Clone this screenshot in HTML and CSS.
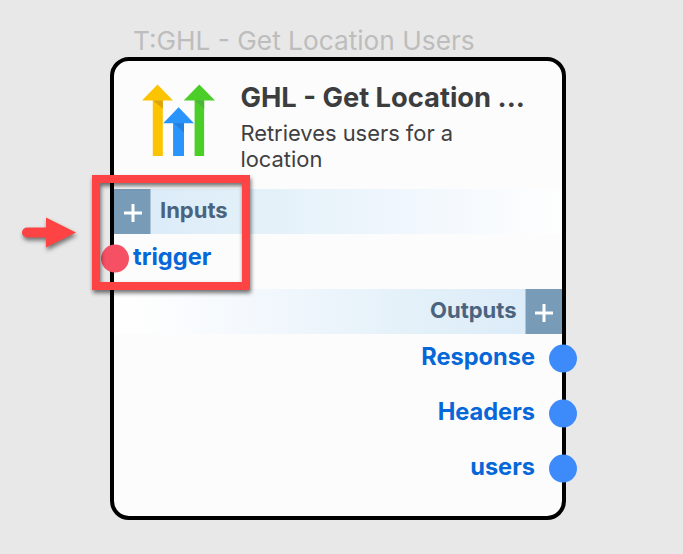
FILE: index.html
```html
<!DOCTYPE html>
<html lang="en">
<head>
<meta charset="utf-8">
<title>GHL - Get Location Users</title>
<link rel="stylesheet" href="styles.css">
</head>
<body>
<main class="canvas">
  <div class="node-label">T:GHL - Get Location Users</div>
  <section class="node">
    <header class="node-header">
      <svg class="logo" viewBox="0 0 74 74" aria-hidden="true">
        <path fill="#fcc400" d="M15.5 1.5 31 17.5H20.8V73H10.8V17.5H0z"/>
        <path fill="#d9a50c" d="M11 17.5h9.8v8.2z"/>
        <path fill="#4bce27" d="M57.3 1.5 73 17.5H62.1V73H52.6V17.5H41.7z"/>
        <path fill="#4bb53a" d="M53 17.5h9.2v8.6z"/>
        <path fill="#2894fc" d="M36.6 24.3 52 40.3H42V73H31.1V40.3H21.2z"/>
        <path fill="#2380dc" d="M31.8 40.3H42v9.2z"/>
      </svg>
      <div class="node-text">
        <h1 class="node-title">GHL - Get Location ...</h1>
        <p class="node-desc">Retrieves users for a location</p>
      </div>
    </header>
    <div class="band inputs">
      <span class="add"><svg viewBox="0 0 18 18"><path d="M9 0v18M0 9h18"/></svg></span>
      <span class="band-title">Inputs</span>
    </div>
    <div class="port port-in"><span class="dot"></span><span class="port-name">trigger</span></div>
    <div class="band outputs">
      <span class="band-title">Outputs</span>
      <span class="add"><svg viewBox="0 0 18 18"><path d="M9 0v18M0 9h18"/></svg></span>
    </div>
    <div class="ports-out">
      <div class="port port-out"><span class="port-name">Response</span><span class="dot"></span></div>
      <div class="port port-out"><span class="port-name">Headers</span><span class="dot"></span></div>
      <div class="port port-out"><span class="port-name">users</span><span class="dot"></span></div>
    </div>
  </section>
  <div class="highlight"></div>
  <svg class="pointer" viewBox="0 0 56 32" aria-hidden="true">
    <path d="M5 10.5H24V0.500L54 15.500 24 30.500V20.500H5A5 5 0 0 1 5 10.500z"/>
  </svg>
</main>
</body>
</html>
```
FILE: styles.css
```css
* { box-sizing: border-box; }

body {
  margin: 0;
  background: #e8e8e8;
  font-family: Inter, "Liberation Sans", sans-serif;
}

.canvas {
  position: relative;
  width: 683px;
  height: 554px;
  padding: 24px 0 0 110px;
  overflow: hidden;
}

.node-label {
  height: 33px;
  padding-left: 23px;
  font-size: 26.25px;
  line-height: 33px;
  color: #bdbdbd;
  white-space: nowrap;
}

.node {
  width: 456px;
  height: 463px;
  border: 4px solid #000;
  border-radius: 19px;
  background: #fcfcfc;
}

.node-header {
  display: flex;
  height: 128px;
  padding: 22px 0 0 28px;
}

.logo {
  flex: none;
  width: 74px;
  height: 74px;
}

.node-text { margin-left: 24.4px; }

.node-title {
  margin: 0;
  font-size: 27.3px;
  font-weight: 700;
  line-height: 30px;
  color: #3c3d3f;
  white-space: nowrap;
}

.node-desc {
  width: 240px;
  margin: 7px 0 0;
  font-size: 21.9px;
  line-height: 26px;
  color: #3f4042;
}

.band {
  display: flex;
  height: 45.4px;
}

.inputs { background: linear-gradient(90deg, #d9eaf8, #e4f1f9 35%, #eff6fd 62%, #fefefe); }

.outputs {
  justify-content: flex-end;
  background: linear-gradient(270deg, #d9eaf8, #e4f1f9 35%, #f3f8fd 68%, #fefefe 95%);
}

.add {
  display: grid;
  place-items: center;
  width: 37px;
  background: #789bb7;
  border-right: 1px solid #adc4d6;
}

.outputs .add {
  border-right: 0;
  border-left: 1px solid #adc4d6;
}

.add svg {
  width: 18px;
  height: 18px;
  margin: 2px 0 0 1px;
  fill: none;
  stroke: #fff;
  stroke-width: 3;
}

.outputs .add svg { margin-left: 0; }

.band-title {
  padding: 0 8.5px 0 9px;
  font-size: 22px;
  font-weight: 700;
  line-height: 42px;
  color: #4a637e;
}

.port {
  display: flex;
  align-items: center;
  height: 55px;
}

.port-in {
  height: 54.6px;
  margin-left: -13px;
  padding-bottom: 6px;
}

.port-out {
  justify-content: flex-end;
  margin-right: -15px;
}

.dot {
  flex: none;
  width: 28px;
  height: 28px;
  border-radius: 50%;
  background: #3d8bfb;
  transform: translateY(-0.4px);
}

.port-in .dot { background: #f55064; }

.port-name {
  font-size: 23.6px;
  font-weight: 700;
  line-height: 28px;
  color: #0667d8;
  transform: translateY(-2px);
}

.port-in .port-name { margin-left: 4px; }
.port-out .port-name { margin-right: 14px; }
.ports-out { margin-top: -3px; }

.highlight {
  position: absolute;
  left: 92px;
  top: 175px;
  width: 158px;
  height: 115px;
  border: 8px solid #fe4345;
  filter: drop-shadow(1px 3px 2px rgba(0, 0, 0, 0.55));
}

.pointer {
  position: absolute;
  left: 22px;
  top: 217px;
  width: 56px;
  height: 32px;
  overflow: visible;
  fill: #fe4345;
  filter: drop-shadow(1px 3px 2px rgba(0, 0, 0, 0.5));
}
```
